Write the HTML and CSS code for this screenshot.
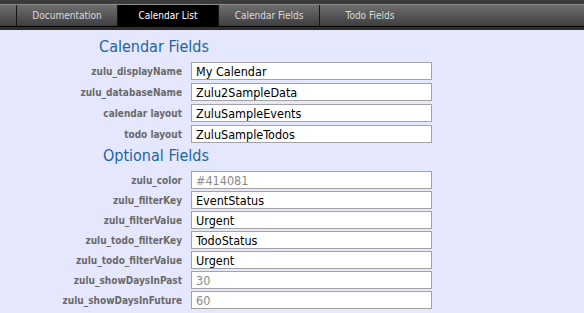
FILE: index.html
```html
<!DOCTYPE html>
<html lang="en">
<head>
<meta charset="UTF-8">
<title>Calendar Fields</title>
<link rel="stylesheet" href="styles.css">
</head>
<body>
<div class="topbar"></div>
<div class="tabs">
    <div class="tab">Documentation</div>
    <div class="tab active">Calendar List</div>
    <div class="tab">Calendar Fields</div>
    <div class="tab">Todo Fields</div>
</div>
<div class="tabs-bottom"></div>

<div class="content">
    <h2 class="heading">Calendar Fields</h2>
    <div class="fields">
        <label>zulu_displayName</label><input value="My Calendar">
        <label>zulu_databaseName</label><input value="Zulu2SampleData">
        <label>calendar layout</label><input value="ZuluSampleEvents">
        <label>todo layout</label><input value="ZuluSampleTodos">
    </div>

    <h2 class="heading second">Optional Fields</h2>
    <div class="fields tight">
        <label>zulu_color</label><input placeholder="#414081">
        <label>zulu_filterKey</label><input value="EventStatus">
        <label>zulu_filterValue</label><input value="Urgent">
        <label>zulu_todo_filterKey</label><input value="TodoStatus">
        <label>zulu_todo_filterValue</label><input value="Urgent">
        <label>zulu_showDaysInPast</label><input placeholder="30">
        <label>zulu_showDaysInFuture</label><input placeholder="60">
    </div>
</div>
</body>
</html>
```

FILE: styles.css
```css
body, html {
    margin:0; padding:0; height:100%;
    background:#e5e8fc;
    font-family:"DejaVu Sans Condensed","DejaVu Sans",sans-serif;
}
.topbar {
    height:4px; background:#3b3b3b;
    border-bottom:1px solid #8c8c8c;
}
.tabs {
    display:flex; height:21px; padding-left:16px;
    background:linear-gradient(to bottom, #6e6e6e, #3e3e3e);
}
.tabs-bottom {
    height:1px; background:#000;
    border-bottom:3px solid #2e2e2e;
}
.tab {
    width:100px; flex-shrink:0; border-left:1px solid #141414;
    display:flex; justify-content:center; align-items:center;
    font-size:10px; color:#dcdcdc;
}
.tab.active {
    background:#000; color:#fff;
}
.content {
    padding-top:6px;
}
.heading {
    width:209px; margin:0 0 4px 0;
    text-align:right;
    font-size:16px; line-height:22px; font-weight:normal;
    color:#1d64a2;
}
.heading.second {
    margin-top:2px;
}
.fields {
    display:grid; grid-template-columns:182px 241px;
    column-gap:9px; row-gap:3px;
}
.fields.tight {
    row-gap:2px;
}
.fields label {
    text-align:right; align-self:center;
    font-size:10px; font-weight:bold; color:#6a6a6a;
}
.fields input {
    box-sizing:border-box; height:18px; width:241px;
    margin:0; padding:0 4px;
    border:1px solid #a3a3a3; background:#fff;
    font-family:"DejaVu Sans Condensed","DejaVu Sans",sans-serif;
    font-size:12.5px; color:#000;
}
.fields input::placeholder {
    color:#8a8a8a;
}
```
